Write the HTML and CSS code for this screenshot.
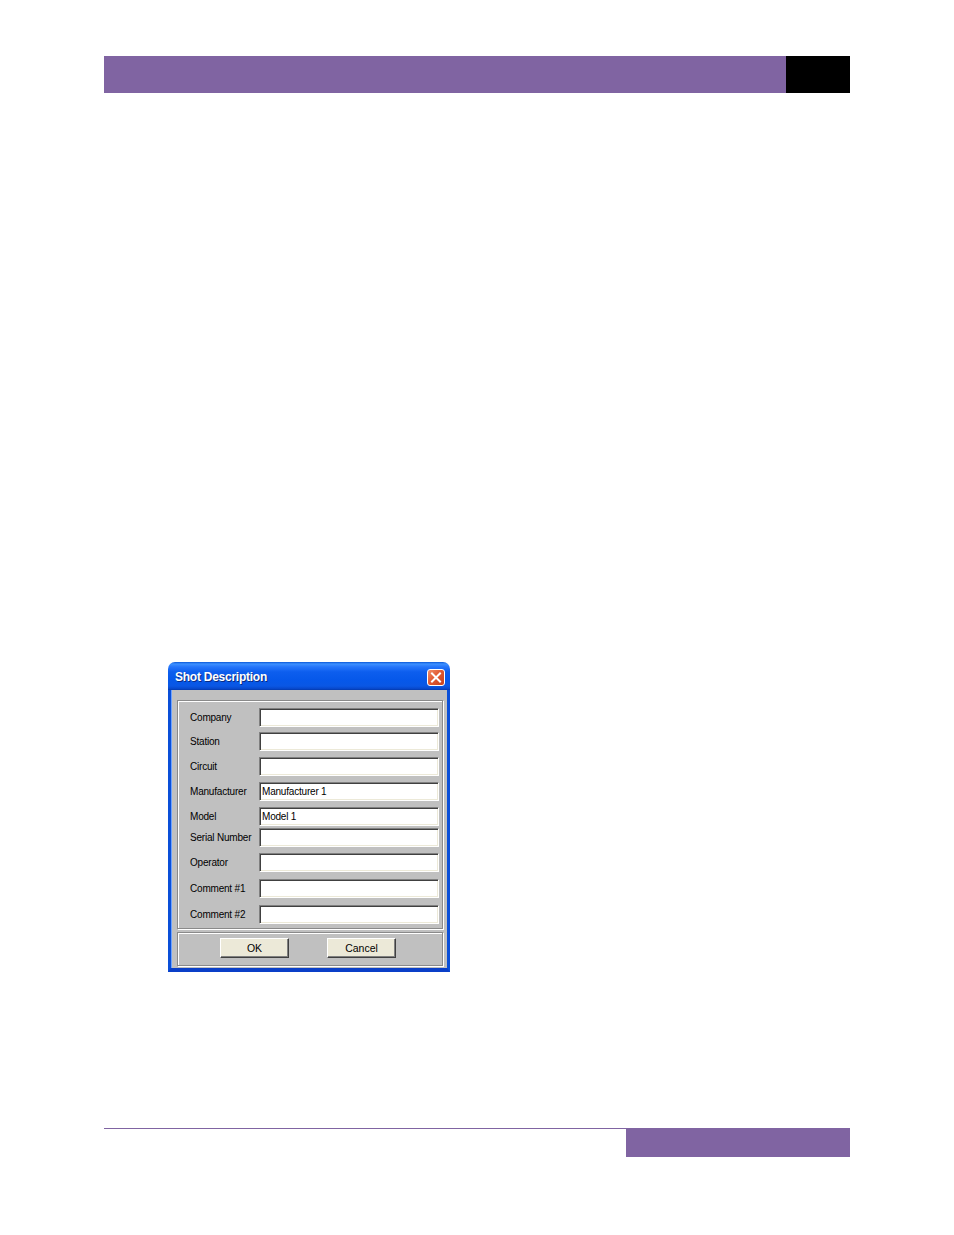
FILE: index.html
```html
<!DOCTYPE html>
<html>
<head>
<meta charset="utf-8">
<title>Shot Description</title>
<link rel="stylesheet" href="styles.css">
</head>
<body>
<div class="page">
  <header class="header">
    <div class="header-bar"></div>
    <div class="header-tab"></div>
  </header>

  <main class="content">
    <div class="window">
      <div class="titlebar">
        <span class="title">Shot Description</span>
        <span class="close-btn">
          <svg width="12" height="11" viewBox="0 0 12 11">
            <path d="M2 1.5 L10 9.5 M10 1.5 L2 9.5" stroke="#fff" stroke-width="2" stroke-linecap="square" fill="none"/>
          </svg>
        </span>
      </div>
      <div class="window-body">
        <div class="group fields">
          <div class="row"><span class="label">Company</span><span class="input"></span></div>
          <div class="row"><span class="label">Station</span><span class="input"></span></div>
          <div class="row"><span class="label">Circuit</span><span class="input"></span></div>
          <div class="row"><span class="label">Manufacturer</span><span class="input">Manufacturer 1</span></div>
          <div class="row"><span class="label">Model</span><span class="input">Model 1</span></div>
          <div class="row"><span class="label">Serial Number</span><span class="input"></span></div>
          <div class="row"><span class="label">Operator</span><span class="input"></span></div>
          <div class="row"><span class="label">Comment #1</span><span class="input"></span></div>
          <div class="row"><span class="label">Comment #2</span><span class="input"></span></div>
        </div>
        <div class="group buttons">
          <span class="btn">OK</span>
          <span class="btn">Cancel</span>
        </div>
      </div>
    </div>
  </main>

  <footer class="footer">
    <div class="footer-box"></div>
  </footer>
</div>
</body>
</html>
```

FILE: styles.css
```css
html, body {
  margin: 0;
  padding: 0;
  background: #ffffff;
}

.page {
  width: 954px;
  height: 1235px;
  padding-top: 56px;
  box-sizing: border-box;
  font-family: "Liberation Sans", Arial, sans-serif;
}

.header {
  display: flex;
  margin-left: 104px;
  width: 746px;
  height: 37px;
}

.header-bar {
  flex: 1;
  background: #8064a2;
}

.header-tab {
  width: 64px;
  background: #000000;
}

.content {
  padding-left: 168px;
  margin-top: 569px;
}

/* ---------- XP window ---------- */
.window {
  width: 282px;
  height: 310px;
  display: flex;
  flex-direction: column;
}

.titlebar {
  height: 28px;
  box-sizing: border-box;
  display: flex;
  align-items: center;
  justify-content: space-between;
  padding: 0 5px 0 7px;
  border-radius: 7px 7px 0 0;
  background: linear-gradient(to bottom,
    #0a57d8 0px, #3d90ff 2px, #2474fa 5px, #0d5eee 10px,
    #0658ea 18px, #0a57e4 24px, #0746c8 27px, #0338a8 28px);
}

.title {
  color: #ffffff;
  font-weight: bold;
  font-size: 12px;
  letter-spacing: -0.25px;
  text-shadow: 1px 1px 0 #0a2a80;
  margin-top: 2px;
}

.close-btn {
  width: 18px;
  height: 17px;
  box-sizing: border-box;
  border: 1px solid #ffffff;
  border-radius: 3px;
  background: linear-gradient(135deg, #f0916c 0%, #e25a32 45%, #c7411c 100%);
  display: flex;
  align-items: center;
  justify-content: center;
  margin-top: 2px;
}

.window-body {
  flex: 1;
  background: #c0c0c0;
  border-left: 3px solid #0a4fd8;
  border-right: 3px solid #0a4fd8;
  border-bottom: 4px solid #0a3fc8;
  box-shadow: inset 1px 0 0 #6ea3ff;
  padding: 10px 4px 2px 6px;
  display: flex;
  flex-direction: column;
  gap: 3px;
}

.group {
  border: 1px solid #8a8a8a;
  box-shadow: inset 1px 1px 0 #ffffff, 1px 1px 0 #ffffff;
  box-sizing: border-box;
}

.fields {
  height: 229px;
  padding: 7px 3px 0 11px;
  display: flex;
  flex-direction: column;
}

.row {
  display: flex;
  align-items: center;
  height: 19px;
  margin-top: 6px;
}

.row:first-child { margin-top: 0; }
.row:nth-child(2) { margin-top: 5px; }
.row:nth-child(6) { margin-top: 2px; }
.row:nth-child(8),
.row:nth-child(9) { margin-top: 7px; }

.label {
  flex: 0 0 70px;
  box-sizing: border-box;
  font-size: 10px;
  letter-spacing: -0.2px;
  color: #000000;
  padding-left: 1px;
  margin-top: -1px;
  white-space: nowrap;
}

.input {
  flex: 0 0 180px;
  height: 19px;
  box-sizing: border-box;
  background: #ffffff;
  border-top: 1px solid #808080;
  border-left: 1px solid #808080;
  border-bottom: 1px solid #ffffff;
  border-right: 1px solid #ffffff;
  box-shadow: inset 1px 1px 0 #404040, inset -1px -1px 0 #ece9d8;
  font-size: 10px;
  letter-spacing: -0.2px;
  line-height: 17px;
  padding-left: 2px;
  color: #000000;
  white-space: nowrap;
}

.buttons {
  height: 34px;
  display: flex;
  align-items: flex-start;
  padding: 5px 0 0 42px;
  gap: 38px;
}

.btn {
  width: 69px;
  height: 20px;
  box-sizing: border-box;
  background: #ece9d8;
  border-top: 1px solid #ffffff;
  border-left: 1px solid #ffffff;
  border-bottom: 1px solid #404040;
  border-right: 1px solid #404040;
  box-shadow: inset -1px -1px 0 #808080;
  font-size: 10.5px;
  line-height: 18px;
  text-align: center;
  color: #000000;
}

/* ---------- footer ---------- */
.footer {
  margin-top: 156px;
  margin-left: 104px;
  width: 746px;
  border-top: 1px solid #8064a2;
  display: flex;
  justify-content: flex-end;
}

.footer-box {
  width: 224px;
  height: 28px;
  background: #8064a2;
}
```
